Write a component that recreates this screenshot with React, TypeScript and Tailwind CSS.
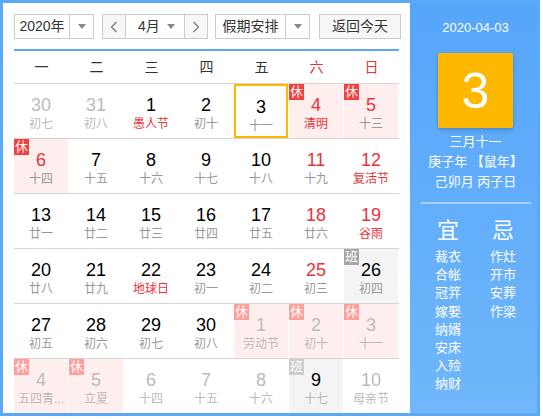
import React from "react";

type Cell = {
  n: number;
  l: string;
  o?: boolean; // other month
  r?: boolean; // red number
  f?: boolean; // festival (red lunar)
  b?: "休" | "班";
  sel?: boolean;
};

const weeks: Cell[][] = [
  [
    { n: 30, l: "初七", o: true },
    { n: 31, l: "初八", o: true },
    { n: 1, l: "愚人节", f: true },
    { n: 2, l: "初十" },
    { n: 3, l: "十一", sel: true },
    { n: 4, l: "清明", r: true, f: true, b: "休" },
    { n: 5, l: "十三", r: true, b: "休" },
  ],
  [
    { n: 6, l: "十四", r: true, b: "休" },
    { n: 7, l: "十五" },
    { n: 8, l: "十六" },
    { n: 9, l: "十七" },
    { n: 10, l: "十八" },
    { n: 11, l: "十九", r: true },
    { n: 12, l: "复活节", r: true, f: true },
  ],
  [
    { n: 13, l: "廿一" },
    { n: 14, l: "廿二" },
    { n: 15, l: "廿三" },
    { n: 16, l: "廿四" },
    { n: 17, l: "廿五" },
    { n: 18, l: "廿六", r: true },
    { n: 19, l: "谷雨", r: true, f: true },
  ],
  [
    { n: 20, l: "廿八" },
    { n: 21, l: "廿九" },
    { n: 22, l: "地球日", f: true },
    { n: 23, l: "初一" },
    { n: 24, l: "初二" },
    { n: 25, l: "初三", r: true },
    { n: 26, l: "初四", b: "班" },
  ],
  [
    { n: 27, l: "初五" },
    { n: 28, l: "初六" },
    { n: 29, l: "初七" },
    { n: 30, l: "初八" },
    { n: 1, l: "劳动节", o: true, b: "休" },
    { n: 2, l: "初十", o: true, b: "休" },
    { n: 3, l: "十一", o: true, b: "休" },
  ],
  [
    { n: 4, l: "五四青...", o: true, b: "休" },
    { n: 5, l: "立夏", o: true, b: "休" },
    { n: 6, l: "十四", o: true },
    { n: 7, l: "十五", o: true },
    { n: 8, l: "十六", o: true },
    { n: 9, l: "十七", o: true, b: "班" },
    { n: 10, l: "母亲节", o: true },
  ],
];

const yi = ["裁衣", "合帐", "冠笄", "嫁娶", "纳婿", "安床", "入殓", "纳财"];
const ji = ["作灶", "开市", "安葬", "作梁"];

function Caret() {
  return (
    <span className="block w-0 h-0 border-l-[4px] border-r-[4px] border-t-[5px] border-l-transparent border-r-transparent border-t-[#888]" />
  );
}

function Chevron({ dir }: { dir: "l" | "r" }) {
  return (
    <svg width="8" height="12" viewBox="0 0 8 12" fill="none">
      <polyline
        points={dir === "l" ? "6.5,1 1.5,6 6.5,11" : "1.5,1 6.5,6 1.5,11"}
        stroke="#777"
        strokeWidth="1.2"
      />
    </svg>
  );
}

function DayCell({ c }: { c: Cell }) {
  const bg = c.b === "休" ? "bg-[#ffeeee]" : c.b === "班" ? "bg-[#f4f4f4]" : "bg-white";
  const numColor =
    c.o && c.b !== "班"
      ? "text-[#bbbbbb]"
      : c.r
      ? "text-[#e8333a]"
      : "text-black";
  const lunarColor = c.o ? "text-[#bbbbbb]" : c.f ? "text-[#e8333a]" : "text-[#999999]";
  const badgeColor =
    c.b === "休"
      ? c.o
        ? "bg-[#ff9e9b]"
        : "bg-[#f5403d]"
      : c.o
      ? "bg-[#cccccc]"
      : "bg-[#a6a6a6]";
  return (
    <div className="pr-px h-full">
      <div
        className={`relative h-full flex flex-col items-center pt-[11px] ${bg} ${
          c.sel ? "border-2 border-[#ffb800] pt-[9px]" : ""
        }`}
      >
        {c.b && (
          <span
            className={`absolute left-0 top-0 w-[15px] h-[16px] text-[13px] leading-[16px] text-white text-center ${badgeColor}`}
          >
            {c.b}
          </span>
        )}
        <span className={`text-[18px] leading-[20px] ${numColor}`}>{c.n}</span>
        <span className={`text-[12px] leading-[16px] mt-[1px] whitespace-nowrap ${lunarColor}`}>{c.l}</span>
      </div>
    </div>
  );
}

export default function App() {
  return (
    <div
      className="w-[540px] h-[416px] border-[3px] border-[#5aa9f8] flex bg-white"
      style={{ fontFamily: '"Liberation Sans", "Noto Sans CJK SC", sans-serif' }}
    >
      {/* Left: calendar */}
      <div className="w-[407px] pl-[11px] pr-[8px] pt-[11px] flex flex-col">
        {/* Controls */}
        <div className="flex items-center h-[26px] text-[14px] text-[#333]">
          <div className="flex h-full w-[80px] border border-[#cccccc]">
            <span className="w-[54px] flex items-center justify-center">2020年</span>
            <span className="flex-1 border-l border-[#cccccc] flex items-center justify-center">
              <Caret />
            </span>
          </div>
          <div className="flex h-full w-[106px] border border-[#cccccc] ml-[8px]">
            <span className="w-[22px] bg-[#f7f7f7] flex items-center justify-center">
              <Chevron dir="l" />
            </span>
            <span className="w-[60px] border-l border-r border-[#cccccc] flex items-center justify-between pl-[12px] pr-[9px]">
              4月
              <Caret />
            </span>
            <span className="flex-1 bg-[#f7f7f7] flex items-center justify-center">
              <Chevron dir="r" />
            </span>
          </div>
          <div className="flex h-full w-[95px] border border-[#cccccc] ml-[7px]">
            <span className="w-[69px] flex items-center justify-center">假期安排</span>
            <span className="flex-1 border-l border-[#cccccc] flex items-center justify-center">
              <Caret />
            </span>
          </div>
          <div className="flex h-full w-[82px] border border-[#cccccc] ml-[9px] bg-[#f7f7f7] items-center justify-center">
            返回今天
          </div>
        </div>

        {/* Weekday header */}
        <div className="mt-[10px] border-t-2 border-[#5aa9f8] w-[385px]">
          <div className="grid grid-cols-7 h-[33px] border-b border-[#d4d4d4] text-[14px] items-center text-center">
            {["一", "二", "三", "四", "五", "六", "日"].map((w, i) => (
              <span key={w} className={i >= 5 ? "text-[#e8333a]" : "text-[#333]"}>
                {w}
              </span>
            ))}
          </div>
          {/* Day rows */}
          {weeks.map((row, ri) => (
            <div
              key={ri}
              className={`grid grid-cols-7 h-[54px] box-content ${
                ri < weeks.length - 1 ? "border-b border-[#d4d4d4]" : ""
              }`}
            >
              {row.map((c, ci) => (
                <DayCell key={ci} c={c} />
              ))}
            </div>
          ))}
        </div>
      </div>

      {/* Right: detail panel */}
      <div className="flex-1 pl-[4px] bg-gradient-to-b from-[#55a5fa] to-[#70b7fb] text-white flex flex-col items-center">
        <div className="mt-[17px] text-[13px] leading-[16px]">2020-04-03</div>
        <div className="mt-[17px] w-[75px] h-[75px] bg-[#ffb800] rounded-[2px] shadow-[0_2px_4px_rgba(0,0,0,0.2)] flex items-center justify-center text-[50px] leading-none">
          3
        </div>
        <div className="mt-[4px] text-[13px] leading-[20px] text-center">
          <div>三月十一</div>
          <div>庚子年 【鼠年】</div>
          <div>己卯月 丙子日</div>
        </div>
        <div className="mt-[10px] w-[110px] h-[2px] bg-[#a9d0fb]" />
        <div className="mt-[14px] flex w-[81px] justify-between">
          <div className="flex flex-col items-center">
            <span className="text-[22px] leading-[26px]">宜</span>
            <div className="mt-[4px] flex flex-col items-center text-[13px] leading-[18.2px]">
              {yi.map((t) => (
                <span key={t}>{t}</span>
              ))}
            </div>
          </div>
          <div className="flex flex-col items-center">
            <span className="text-[22px] leading-[26px]">忌</span>
            <div className="mt-[4px] flex flex-col items-center text-[13px] leading-[18.2px]">
              {ji.map((t) => (
                <span key={t}>{t}</span>
              ))}
            </div>
          </div>
        </div>
      </div>
    </div>
  );
}
